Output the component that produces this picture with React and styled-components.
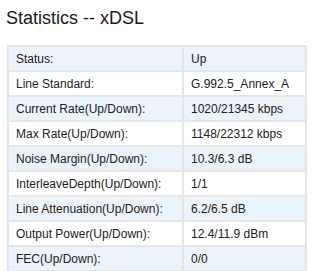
import styled, { createGlobalStyle } from "styled-components";

const GlobalStyle = createGlobalStyle`
  body {
    margin: 0;
    background: #fff;
    font-family: "Liberation Sans", Arial, sans-serif;
    color: #222;
  }
`;

/* Styling */
const Page = styled.div`
  padding: 5px 22px 0 7px;
`;

const Title = styled.h1`
  margin: 0 0 13px -1px;
  font-size: 18px;
  font-weight: 400;
  line-height: 27px;
  color: #1a1a1a;
`;

const Table = styled.table`
  width: 100%;
  table-layout: fixed;
  border-collapse: collapse;
  border: 2px solid #e6e6e6;
  font-size: 12px;
`;

const LabelCol = styled.col`
  width: 175px;
`;

const Row = styled.tr`
  background: ${(props) => (props.$alt ? "#ebf3fb" : "#fff")};
`;

const Cell = styled.td`
  height: 23px;
  padding: 0 0 0 7px;
  border: 2px solid #e6e6e6;
  color: #222;
  white-space: nowrap;
`;

const rows = [
  ["Status:", "Up"],
  ["Line Standard:", "G.992.5_Annex_A"],
  ["Current Rate(Up/Down):", "1020/21345 kbps"],
  ["Max Rate(Up/Down):", "1148/22312 kbps"],
  ["Noise Margin(Up/Down):", "10.3/6.3 dB"],
  ["InterleaveDepth(Up/Down):", "1/1"],
  ["Line Attenuation(Up/Down):", "6.2/6.5 dB"],
  ["Output Power(Up/Down):", "12.4/11.9 dBm"],
  ["FEC(Up/Down):", "0/0"],
];

export default function App() {
  return (
    <>
      <GlobalStyle />
      <Page>
        <Title>Statistics -- xDSL</Title>
        <Table>
          <colgroup>
            <LabelCol />
            <col />
          </colgroup>
          <tbody>
            {rows.map(([label, value], i) => (
              <Row key={label} $alt={i % 2 === 0}>
                <Cell>{label}</Cell>
                <Cell>{value}</Cell>
              </Row>
            ))}
          </tbody>
        </Table>
      </Page>
    </>
  );
}
